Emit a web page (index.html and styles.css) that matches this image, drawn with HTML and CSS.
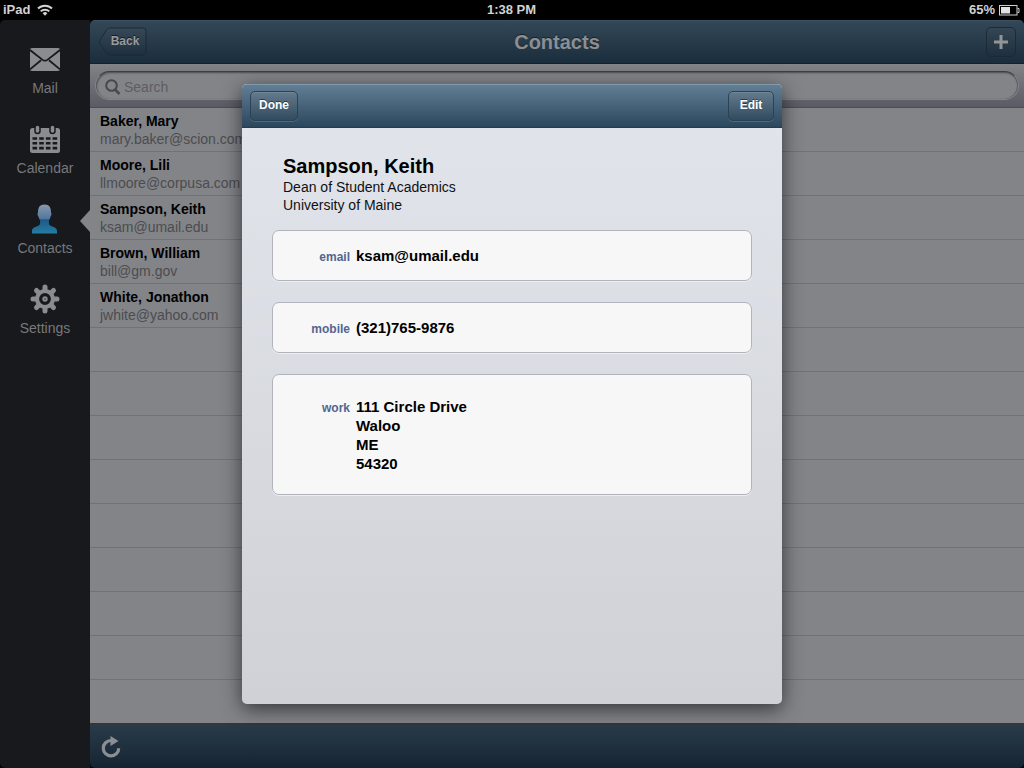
FILE: index.html
```html
<!DOCTYPE html>
<html lang="en">
<head>
<meta charset="utf-8">
<meta name="viewport" content="width=device-width, initial-scale=1">
<title>Contacts</title>
<link rel="stylesheet" href="styles.css">
</head>
<body>
<div class="status">
  <div class="status-left">iPad
    <svg width="16" height="12" viewBox="0 0 16 12" fill="none" stroke="#d2d2d2" stroke-width="2" aria-hidden="true"><path d="M1 4.5a10 10 0 0 1 14 0M3.7 7.4a6.2 6.2 0 0 1 8.6 0"/><path d="M8 11.8 5.6 9.3a3.4 3.4 0 0 1 4.8 0z" fill="#d2d2d2" stroke="none"/></svg>
  </div>
  <div class="status-time">1:38 PM</div>
  <div class="status-right">65%
    <svg width="21" height="11" viewBox="0 0 21 11" aria-hidden="true"><rect x=".5" y=".5" width="17.5" height="9.5" fill="none" stroke="#d0d0d0"/><path d="M18.5 3.5h1.5v4h-1.5" fill="none" stroke="#d0d0d0"/><rect x="2" y="2" width="9" height="6.5" fill="#e2e2e2"/></svg>
  </div>
</div>
<div class="app">
  <nav class="sidebar">
    <a class="tab" href="#mail">
      <svg width="30" height="30" viewBox="0 0 30 30" aria-hidden="true"><rect y="4" width="30" height="23" rx="2" fill="#8b8c8f"/><path d="M0 6l12.3 9.6a4.4 4.4 0 0 0 5.4 0L30 6M0 25.3l11-9M30 25.3l-11-9" fill="none" stroke="#18191c" stroke-width="1.8"/></svg>
      <span>Mail</span>
    </a>
    <a class="tab" href="#calendar">
      <svg width="30" height="30" viewBox="0 0 30 30" aria-hidden="true"><rect y="4" width="30" height="25" rx="2.5" fill="#8b8c8f"/><g fill="#8b8c8f" stroke="#18191c" stroke-width="1.5"><rect x="5" y="1" width="5" height="8.5" rx="2.5"/><rect x="20" y="1" width="5" height="8.5" rx="2.5"/></g><path d="M2.5 14.5h25M2.5 19.3h25M2.5 24.1h25" stroke="#18191c" stroke-width="2.6" stroke-dasharray="4.6 2.1"/></svg>
      <span>Calendar</span>
    </a>
    <a class="tab selected" href="#contacts" aria-current="page">
      <svg width="30" height="30" viewBox="0 0 30 30" aria-hidden="true"><defs><linearGradient id="person" x1="0" y1="0" x2="0" y2="1"><stop offset="0" stop-color="#8798ad"/><stop offset=".48" stop-color="#53789f"/><stop offset=".53" stop-color="#1e5989"/><stop offset="1" stop-color="#247da3"/></linearGradient></defs><path d="M14.500 .5c4.800 0 6.500 3 6.500 7.500 0 1.300.7 1 .4 3-.3 1-.7 1.100-1 2-.5 1.700-.8 2.400-1.500 3.200v3.300c0 3.300 8.100 2.700 8.100 7.200V29.500H2v-2.800c0-4.500 8.100-3.900 8.100-7.200v-3.300c-.7-.8-1-1.500-1.500-3.200-.3-.9-.7-1-1-2-.3-2 .4-1.700.4-3C8 3.500 9.700.5 14.500.5z" fill="url(#person)"/></svg>
      <span>Contacts</span>
    </a>
    <a class="tab" href="#settings">
      <svg width="30" height="30" viewBox="0 0 30 30" aria-hidden="true"><g stroke="#8b8c8f" stroke-width="5" stroke-linecap="round"><path d="M15 3v24M3 15h24M6.500 6.500l17 17M23.500 6.500l-17 17"/></g><circle cx="15" cy="15" r="10" fill="#8b8c8f"/><circle cx="15" cy="15" r="4.300" fill="#8b8c8f" stroke="#18191c" stroke-width="3.200"/><circle cx="15" cy="15" r="1" fill="#55565a"/></svg>
      <span>Settings</span>
    </a>
  </nav>
  <main class="main">
    <header class="bar">
      <button class="back" type="button">
        <svg class="back-shape" width="50" height="31" viewBox="0 0 50 31" aria-hidden="true"><defs><linearGradient id="backfill" x1="0" y1="0" x2="0" y2="1"><stop offset="0" stop-color="#374957"/><stop offset="1" stop-color="#1e303f"/></linearGradient></defs><path d="M1 15 8.500 3q1.500-2 4-2H45q3 0 3 3v21q0 3-3 3H12.500q-2.500 0-4-2z" fill="url(#backfill)" stroke="#1b2a36"/></svg>
        <span>Back</span>
      </button>
      <h1>Contacts</h1>
      <button class="dim-button" type="button" aria-label="Add contact"><svg width="14" height="14" viewBox="0 0 14 14" aria-hidden="true"><path d="M7 0v14M0 7h14" stroke="#929496" stroke-width="3"/></svg></button>
    </header>
    <div class="search-bar">
      <label class="search">
        <svg width="16" height="16" viewBox="0 0 16 16" fill="none" stroke="#46484c" aria-hidden="true"><circle cx="6.500" cy="6.500" r="5.300" stroke-width="2"/><path d="M10 10.500l4.500 4.500" stroke-width="2.500"/></svg>
        <input type="search" placeholder="Search" aria-label="Search">
      </label>
    </div>
    <ul class="list">
      <li><strong>Baker, Mary</strong><span>mary.baker@scion.com</span></li>
      <li><strong>Moore, Lili</strong><span>llmoore@corpusa.com</span></li>
      <li><strong>Sampson, Keith</strong><span>ksam@umail.edu</span></li>
      <li><strong>Brown, William</strong><span>bill@gm.gov</span></li>
      <li><strong>White, Jonathon</strong><span>jwhite@yahoo.com</span></li>
    </ul>
    <footer class="toolbar">
      <button class="refresh" type="button" aria-label="Refresh"><svg width="20" height="22" viewBox="0 0 20 22" aria-hidden="true"><path d="M10 4.500a7.700 7.700 0 1 0 7.700 7.700" fill="none" stroke="#8b8f94" stroke-width="3.200"/><path d="M9.500 0l8 5-8 5z" fill="#8b8f94"/></svg></button>
    </footer>
  </main>
  <div class="overlay">
    <section class="sheet" role="dialog" aria-labelledby="person-name">
      <header class="sheet-bar">
        <button class="button" type="button">Done</button>
        <button class="button" type="button">Edit</button>
      </header>
      <div class="sheet-body">
        <div class="identity">
          <h2 id="person-name">Sampson, Keith</h2>
          <p>Dean of Student Academics</p>
          <p>University of Maine</p>
        </div>
        <dl class="cards">
          <div class="card"><dt>email</dt><dd>ksam@umail.edu</dd></div>
          <div class="card"><dt>mobile</dt><dd>(321)765-9876</dd></div>
          <div class="card address"><dt>work</dt><dd>111 Circle Drive<br>Waloo<br>ME<br>54320</dd></div>
        </dl>
      </div>
    </section>
  </div>
</div>
</body>
</html>
```

FILE: styles.css
```css
* { box-sizing: border-box; }
body {
  margin: 0;
  min-height: 100vh;
  display: flex;
  flex-direction: column;
  background: #000;
  font-family: "Liberation Sans", Arial, sans-serif;
  font-size: 14px;
  line-height: 18px;
}
h1, h2, p, ul, dl, dd { margin: 0; padding: 0; }
svg { display: block; flex: none; }
button { border: 0; padding: 0; font: inherit; background: none; cursor: pointer; }

.status {
  display: grid;
  grid-template-columns: 1fr auto 1fr;
  align-items: center;
  height: 20px;
  padding: 0 4px 0 3px;
  color: #d2d2d2;
  font-size: 13px;
  font-weight: bold;
}
.status-left, .status-right { display: flex; align-items: center; gap: 7px; }
.status-right { justify-content: flex-end; gap: 4px; }

.app { position: relative; flex: 1; display: flex; }
.sidebar {
  width: 90px;
  flex: none;
  padding-top: 24px;
  display: flex;
  flex-direction: column;
  gap: 20px;
  background: #18191c;
  border-radius: 5px 0 0 5px;
}
.tab {
  position: relative;
  height: 60px;
  display: flex;
  flex-direction: column;
  align-items: center;
  gap: 5px;
  color: #77787b;
  text-decoration: none;
}
.selected::after {
  content: "";
  position: absolute;
  right: 0;
  top: 6px;
  border: 11px solid transparent;
  border-left: 0;
  border-right: 10px solid #838488;
}

.main { flex: 1; min-width: 0; display: flex; flex-direction: column; }
.bar {
  height: 44px;
  flex: none;
  display: grid;
  grid-template-columns: 1fr auto 1fr;
  align-items: center;
  padding: 0 8px;
  background: linear-gradient(#334857, #1a2d3d);
  border-top: 1px solid #3c505f;
  border-bottom: 1px solid #102130;
  border-radius: 5px 5px 0 0;
}
.bar h1 {
  color: #8c8e92;
  font-size: 20px;
  line-height: 24px;
  text-shadow: 0 -1px 0 #15222d;
}
.back {
  position: relative;
  width: 50px;
  height: 30px;
  padding: 0 0 2px 4px;
  color: #999b9d;
  font-size: 12px;
  font-weight: bold;
  text-shadow: 0 -1px 0 #101c26;
}
.back-shape { position: absolute; inset: 0; }
.back span { position: relative; }
.dim-button {
  justify-self: end;
  display: grid;
  place-items: center;
  width: 30px;
  height: 30px;
  border: 1px solid #1b2a36;
  border-radius: 5px;
  background: linear-gradient(#344653, #1e303f);
}
.search-bar {
  height: 44px;
  flex: none;
  padding: 7px 5px 8px;
  background: linear-gradient(#828387, #595b65);
  border-bottom: 1px solid #4c4e55;
}
.search {
  display: flex;
  align-items: center;
  height: 29px;
  padding: 2px 10px 0 9px;
  border: 1px solid transparent;
  border-top-color: #3c3e42;
  border-radius: 15px;
  background: #838488;
  box-shadow: inset 1px 1px 2px #4c4e52, inset -1px 0 1px #5c5e62;
}
.search input {
  flex: 1;
  min-width: 0;
  border: 0;
  padding: 1px 3px;
  background: none;
  font: inherit;
  outline: 0;
}
.search input::placeholder { color: #5d5e62; opacity: 1; }
.list {
  flex: 1;
  list-style: none;
  background: repeating-linear-gradient(#838488 0 43px, #717276 43px 44px);
}
.list li {
  height: 44px;
  padding: 4px 10px 3px;
  display: flex;
  flex-direction: column;
}
.list strong { color: #000; }
.list span { color: #4b4c4f; }
.toolbar {
  height: 45px;
  flex: none;
  display: flex;
  align-items: center;
  padding: 1px 11px 0;
  background: linear-gradient(#293b49, #152433);
  border-top: 2px solid #33363d;
  border-radius: 0 0 5px 5px;
}

.overlay {
  position: absolute;
  inset: 0;
  display: grid;
  place-items: center;
}
.sheet {
  width: 540px;
  min-height: 620px;
  border-radius: 5px;
  overflow: hidden;
  display: flex;
  flex-direction: column;
  background: linear-gradient(#e2e6ec, #d0d1d6);
  box-shadow: 0 5px 20px rgba(0, 0, 0, .6);
}
.sheet-bar {
  height: 44px;
  display: flex;
  align-items: center;
  justify-content: space-between;
  padding: 0 8px;
  background: linear-gradient(#617e94, #2b475d);
  border-top: 1px solid #7f9aac;
  border-bottom: 1px solid #1b3f58;
}
.button {
  height: 30px;
  min-width: 46px;
  padding: 0 8px 2px;
  border: 1px solid #2a4253;
  border-radius: 5px;
  background: linear-gradient(#647b8c, #314b5f);
  box-shadow: 0 1px 0 rgba(255, 255, 255, .15), inset 0 1px 0 rgba(255, 255, 255, .1);
  color: #fff;
  font-size: 12px;
  font-weight: bold;
  text-shadow: 0 -1px 0 #263c4c;
}
.sheet-body { padding: 26px 30px; }
.identity { padding: 0 11px; color: #111; }
.identity h2 { color: #000; font-size: 20px; line-height: 24px; }
.cards {
  display: flex;
  flex-direction: column;
  gap: 21px;
  padding-top: 16px;
}
.card {
  display: grid;
  grid-template-columns: 77px 1fr;
  column-gap: 6px;
  align-items: baseline;
  padding: 15px 0 13px;
  border: 1px solid #b2b4bd;
  border-radius: 7px;
  background: #f7f7f7;
  box-shadow: 0 1px 0 #eceef1;
  line-height: 19px;
}
.card dt { color: #526691; font-size: 12px; font-weight: bold; text-align: right; }
.card dd { font-size: 15px; font-weight: bold; }
.address { padding: 22px 0 21px; }
```
